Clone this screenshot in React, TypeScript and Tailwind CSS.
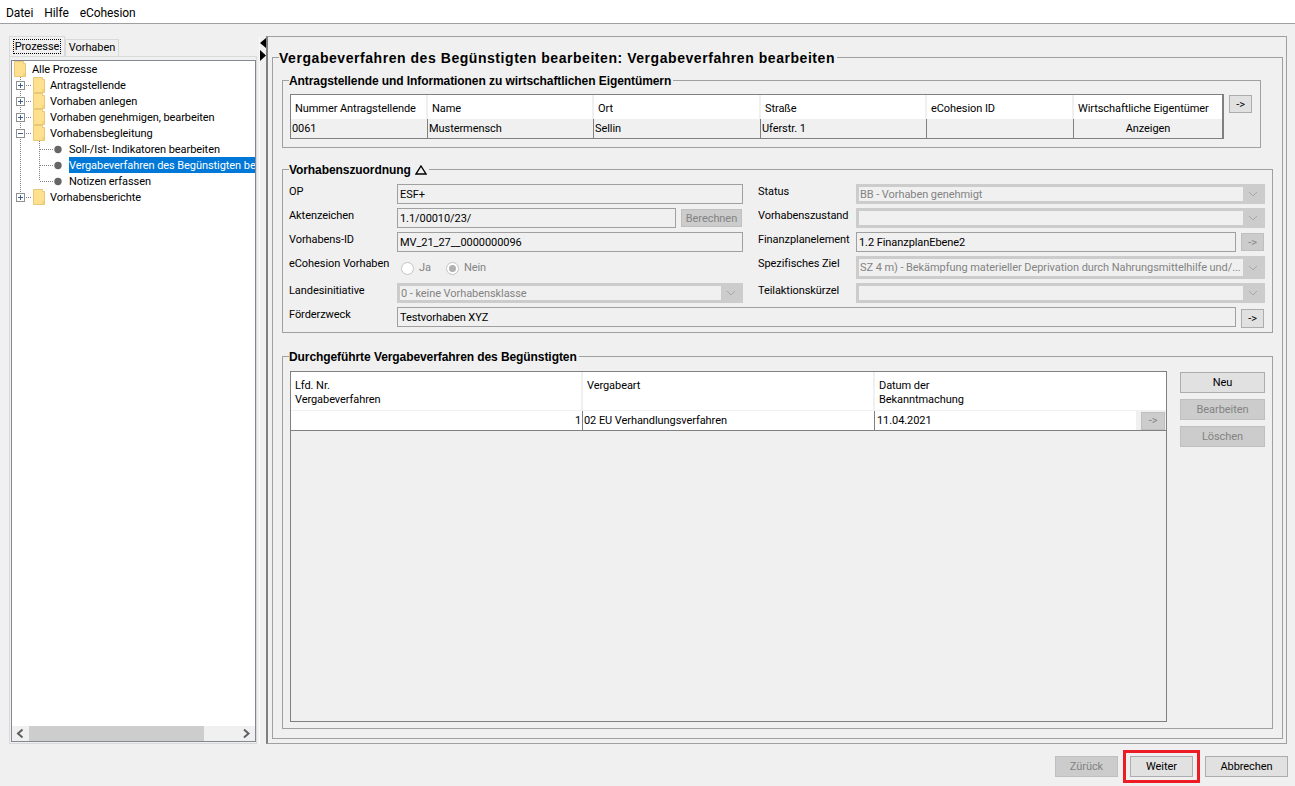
import type { ReactNode } from 'react'

function Folder() {
  return (
    <>
      <path d="M0.5 0.5H9.5V2.5H11.5V15.5H0.5Z" fill="#fee08f" stroke="#e8c877" />
      <path d="M9 12H11V15H9Z" fill="#f8d27a" />
    </>
  )
}

function Plus({ open = false }: { open?: boolean }) {
  return (
    <g>
      <rect x="4.5" y="4.5" width="8" height="8" fill="#fff" stroke="#8e8f8f" />
      <path d="M6 8.5H11" stroke="#3f5f8f" />
      {!open && <path d="M8.5 6V11" stroke="#3f5f8f" />}
    </g>
  )
}

function BranchRow({ label, open = false, last = false }: { label: string; open?: boolean; last?: boolean }) {
  return (
    <div className="flex h-4 items-center">
      <svg width="38" height="16" className="shrink-0">
        <path d={last ? 'M8.5 0V8' : 'M8.5 0V16'} stroke="#808080" strokeDasharray="1 1" />
        <path d="M12 8.5H20" stroke="#808080" strokeDasharray="1 1" />
        <Plus open={open} />
        <g transform="translate(21 0)">
          <Folder />
        </g>
      </svg>
      <span className="mt-0.5 whitespace-nowrap">{label}</span>
    </div>
  )
}

function LeafRow({ label, selected = false, last = false }: { label: string; selected?: boolean; last?: boolean }) {
  return (
    <div className="flex h-4 items-center">
      <svg width="57" height="16" className="shrink-0">
        <path d="M8.5 0V16" stroke="#808080" strokeDasharray="1 1" />
        <path d={last ? 'M27.5 0V8' : 'M27.5 0V16'} stroke="#808080" strokeDasharray="1 1" />
        <path d="M28 8.5H42" stroke="#808080" strokeDasharray="1 1" />
        <circle cx="46" cy="8.5" r="3.7" fill="#666" />
      </svg>
      <span className={selected ? 'h-4 flex-1 overflow-hidden bg-[#0078d7] leading-[18px] whitespace-nowrap text-white' : 'mt-0.5 whitespace-nowrap'}>{label}</span>
    </div>
  )
}

function Tree() {
  return (
    <div className="flex-1 overflow-hidden">
      <div className="flex h-4 items-center">
        <svg width="20" height="16" className="shrink-0">
          <g transform="translate(2 0)">
            <Folder />
          </g>
        </svg>
        <span className="mt-0.5">Alle Prozesse</span>
      </div>
      <BranchRow label="Antragstellende" />
      <BranchRow label="Vorhaben anlegen" />
      <BranchRow label="Vorhaben genehmigen, bearbeiten" />
      <BranchRow label="Vorhabensbegleitung" open />
      <LeafRow label="Soll-/Ist- Indikatoren bearbeiten" />
      <LeafRow label="Vergabeverfahren des Begünstigten bearbeiten" selected />
      <LeafRow label="Notizen erfassen" last />
      <BranchRow label="Vorhabensberichte" last />
    </div>
  )
}

function Scrollbar() {
  return (
    <div className="flex h-[15px] items-center bg-[#f0f0f0]">
      <svg width="17" height="15" className="shrink-0">
        <path d="M10.5 3.5L6 7.5L10.5 11.5" fill="none" stroke="#606060" strokeWidth="2" />
      </svg>
      <div className="h-full w-[175px] bg-[#cdcdcd]" />
      <div className="flex-1" />
      <svg width="17" height="15" className="shrink-0">
        <path d="M6 3.5L10.5 7.5L6 11.5" fill="none" stroke="#606060" strokeWidth="2" />
      </svg>
    </div>
  )
}

function Group({ title, legendClass = '', className = '', children }: { title: ReactNode; legendClass?: string; className?: string; children: ReactNode }) {
  return (
    <fieldset className={'min-w-0 border border-[#a0a0a0] ' + className}>
      <legend className={'flex h-4 items-center pt-0.5 pr-0.5 [font-family:Liberation_Sans,sans-serif] text-[12px] leading-[14px] font-bold tracking-[-0.08px] whitespace-nowrap ' + legendClass}>{title}</legend>
      {children}
    </fieldset>
  )
}

function Btn({ label, disabled = false, className = '' }: { label: string; disabled?: boolean; className?: string }) {
  return (
    <div
      className={
        'flex items-center justify-center border pt-0.5 whitespace-nowrap ' +
        (disabled ? 'border-[#bfbfbf] bg-[#cccccc] text-[#838383] ' : 'border-[#adadad] bg-[#e1e1e1] ') +
        className
      }
    >
      {label}
    </div>
  )
}

function Field({ value, className = '' }: { value: string; className?: string }) {
  return <div className={'flex h-5 items-center border border-[#a0a0a0] px-[2px] pt-0.5 whitespace-nowrap ' + className}>{value}</div>
}

function Combo({ value = '', className = '' }: { value?: string; className?: string }) {
  return (
    <div className={'flex items-stretch border-[3px] border-[#cccccc] bg-[#cccccc] text-[#838383] ' + className}>
      <div className="flex min-w-0 flex-1 items-center overflow-hidden bg-[#f0f0f0] pt-0.5 pl-px whitespace-nowrap">{value}</div>
      <div className="flex w-[19px] shrink-0 items-center justify-center">
        <svg width="10" height="6">
          <path d="M1 1L5 5L9 1" fill="none" stroke="#a8a8a8" />
        </svg>
      </div>
    </div>
  )
}

function Label({ children }: { children: ReactNode }) {
  return <div className="h-4 leading-4 whitespace-nowrap">{children}</div>
}

function Radio({ label, checked = false }: { label: string; checked?: boolean }) {
  return (
    <div className="flex items-center gap-[5px] text-[#838383]">
      <div className="flex h-[13px] w-[13px] items-center justify-center rounded-full border border-[#c4c4c4] bg-white">
        {checked && <div className="h-[7px] w-[7px] rounded-full bg-[#b0b0b0]" />}
      </div>
      {label}
    </div>
  )
}

const applicantCols = [
  { head: 'Nummer Antragstellende', value: '0061', w: 'w-[137px]' },
  { head: 'Name', value: 'Mustermensch', w: 'w-[166px]' },
  { head: 'Ort', value: 'Sellin', w: 'w-[167px]' },
  { head: 'Straße', value: 'Uferstr. 1', w: 'w-[166px]' },
  { head: 'eCohesion ID', value: '', w: 'w-[147px]' },
]

function ApplicantTable() {
  return (
    <div className="flex h-[45px] w-[934px] border border-r-2 border-[#808080]">
      {applicantCols.map((c) => (
        <div key={c.head} className={c.w + ' flex flex-col'}>
          <div className="flex h-6 items-center border-r-2 border-[#f0f0f0] bg-white pt-1 pl-1 whitespace-nowrap">{c.head}</div>
          <div className="flex flex-1 items-center border-r border-[#808080] pt-0.5 pl-px">{c.value}</div>
        </div>
      ))}
      <div className="flex flex-1 flex-col">
        <div className="flex h-6 items-center bg-white pt-1 pl-1 whitespace-nowrap">Wirtschaftliche Eigentümer</div>
        <div className="flex flex-1 items-center justify-center pt-0.5">Anzeigen</div>
      </div>
    </div>
  )
}

function ProcedureTable() {
  return (
    <div className="flex min-h-0 flex-1 flex-col border border-[#808080]">
      <div className="flex h-[38px] bg-white leading-[14px]">
        <div className="w-[292px] border-r-2 border-[#f0f0f0] pt-[7px] pl-1">
          Lfd. Nr.
          <br />
          Vergabeverfahren
        </div>
        <div className="w-[292px] border-r-2 border-[#f0f0f0] pt-[7px] pl-1">Vergabeart</div>
        <div className="flex-1 pt-[7px] pl-1">
          Datum der
          <br />
          Bekanntmachung
        </div>
      </div>
      <div className="flex h-[21px] border-t border-b border-t-[#f0f0f0] border-b-[#808080] bg-white">
        <div className="flex w-[292px] items-center justify-end border-r border-[#808080] pt-0.5 pr-px">1</div>
        <div className="flex w-[292px] items-center border-r border-[#808080] pt-0.5 pl-px">02 EU Verhandlungsverfahren</div>
        <div className="flex flex-1 items-center pt-0.5 pl-0.5">11.04.2021</div>
        <div className="flex w-[30px] items-center justify-end bg-[#f0f0f0] pr-px">
          <Btn label="->" disabled className="h-[18px] w-6" />
        </div>
      </div>
    </div>
  )
}

function Assignment() {
  return (
    <div className="grid grid-cols-[108px_346px_15px_98px_409px] grid-rows-[20px_20px_20px_23px_20px_20px] gap-y-1">
      <Label>OP</Label>
      <Field value="ESF+" />
      <div />
      <Label>Status</Label>
      <Combo value="BB - Vorhaben genehmigt" />

      <Label>Aktenzeichen</Label>
      <div className="flex gap-[5px]">
        <Field value="1.1/00010/23/" className="flex-1" />
        <Btn label="Berechnen" disabled className="mt-px mr-px h-[18px] w-[61px]" />
      </div>
      <div />
      <Label>Vorhabenszustand</Label>
      <Combo />

      <Label>Vorhabens-ID</Label>
      <Field value="MV_21_27__0000000096" />
      <div />
      <Label>Finanzplanelement</Label>
      <div className="flex gap-[5px]">
        <Field value="1.2 FinanzplanEbene2" className="flex-1" />
        <Btn label="->" disabled className="mt-px mr-px h-[18px] w-[23px]" />
      </div>

      <Label>eCohesion Vorhaben</Label>
      <div className="flex items-center gap-[15px] pt-0.5 pl-1">
        <Radio label="Ja" />
        <Radio label="Nein" checked />
      </div>
      <div />
      <Label>Spezifisches Ziel</Label>
      <Combo value="SZ 4 m) - Bekämpfung materieller Deprivation durch Nahrungsmittelhilfe und/..." />

      <Label>Landesinitiative</Label>
      <Combo value="0 - keine Vorhabensklasse" />
      <div />
      <Label>Teilaktionskürzel</Label>
      <Combo />

      <Label>Förderzweck</Label>
      <div className="col-span-4 flex gap-[5px]">
        <Field value="Testvorhaben XYZ" className="flex-1" />
        <Btn label="->" className="mt-0.5 mr-px h-[19px] w-[23px]" />
      </div>
    </div>
  )
}

export default function App() {
  return (
    <div className="flex h-screen w-full flex-col overflow-hidden bg-[#f0f0f0] [font-family:Roboto,sans-serif] text-[11px] tracking-[-0.07px] text-black">
      <div className="flex h-6 shrink-0 items-center gap-[11px] border-b border-[#a0a0a0] bg-white pt-[3px] pl-1.5 text-[12px]">
        <span>Datei</span>
        <span>Hilfe</span>
        <span>eCohesion</span>
      </div>

      <div className="flex h-[720px] shrink-0 pt-3 pr-2 pl-[9px]">
        <div className="flex w-[248px] shrink-0 flex-col">
          <div className="flex h-5 shrink-0 items-end">
            <div className="flex h-5 w-14 items-center justify-center border border-b-0 border-[#d9d9d9] bg-[#f0f0f0]">
              <span className="border border-dotted border-black px-px leading-[13px]">Prozesse</span>
            </div>
            <div className="flex h-[17px] w-[54px] items-center justify-center border border-b-0 border-[#d9d9d9]">Vorhaben</div>
          </div>
          <div className="flex min-h-0 flex-1 flex-col border border-[#d9d9d9] pt-[3px] pr-0 pb-px pl-px">
            <div className="flex min-h-0 flex-1 flex-col border border-[#828790] bg-white">
              <Tree />
              <Scrollbar />
            </div>
          </div>
        </div>

        <div className="flex w-[9px] shrink-0 pl-0.5">
          <div className="flex flex-1 flex-col items-end border-l border-[#fafafa] pt-0.5">
            <svg width="6" height="23">
              <path d="M6 0V10L0 5Z" fill="#000" />
              <path d="M0 12V23L6 17.5Z" fill="#000" />
            </svg>
          </div>
        </div>

        <div className="flex w-[1021px] shrink-0 border border-l-2 border-[#a0a0a0] border-l-[#808080] pt-3 pr-[3px] pb-1 pl-1">
          <Group
            title={<span className="text-[14px] tracking-[0.55px]">Vergabeverfahren des Begünstigten bearbeiten: Vergabeverfahren bearbeiten</span>}
            legendClass="-ml-[3px]"
            className="flex flex-1 flex-col px-[9px] pb-[9px]"
          >
            <Group title="Antragstellende und Informationen zu wirtschaftlichen Eigentümern" legendClass="-ml-px" className="mt-[7px] mr-3 h-[76px] px-[7px]">
              <div className="mt-[6px] flex gap-[5px]">
                <ApplicantTable />
                <Btn label="->" className="mt-px h-[18px] w-[23px]" />
              </div>
            </Group>

            <Group
              title={
                <>
                  Vorhabenszuordnung
                  <svg width="12" height="10" className="ml-1">
                    <path d="M6 1L11 9H1Z" fill="none" stroke="#000" strokeWidth="1.4" />
                  </svg>
                </>
              }
              className="mt-[13px] h-[172px] px-1.5 pt-[7px]"
            >
              <Assignment />
            </Group>

            <Group title="Durchgeführte Vergabeverfahren des Begünstigten" legendClass="-ml-px" className="mt-[15px] flex min-h-0 flex-1 gap-[13px] pt-[7px] pr-[7px] pb-1.5 pl-[7px]">
              <div className="flex h-full gap-[13px]">
                <div className="flex h-full w-[877px] flex-col">
                  <ProcedureTable />
                </div>
                <div className="flex w-[85px] flex-col gap-[6px] pt-px">
                  <Btn label="Neu" className="h-[21px]" />
                  <Btn label="Bearbeiten" disabled className="h-[21px]" />
                  <Btn label="Löschen" disabled className="h-[21px]" />
                </div>
              </div>
            </Group>
          </Group>
        </div>
      </div>

      <div className="flex items-start justify-end gap-[5px] pt-1.5 pr-[7px]">
        <Btn label="Zürück" disabled className="mt-1.5 h-[21px] w-[63px]" />
        <div className="border-[3px] border-[#ed1c24] px-1 py-[3px]">
          <Btn label="Weiter" className="h-[21px] w-[63px]" />
        </div>
        <Btn label="Abbrechen" className="mt-1.5 h-[21px] w-[83px]" />
      </div>
    </div>
  )
}
